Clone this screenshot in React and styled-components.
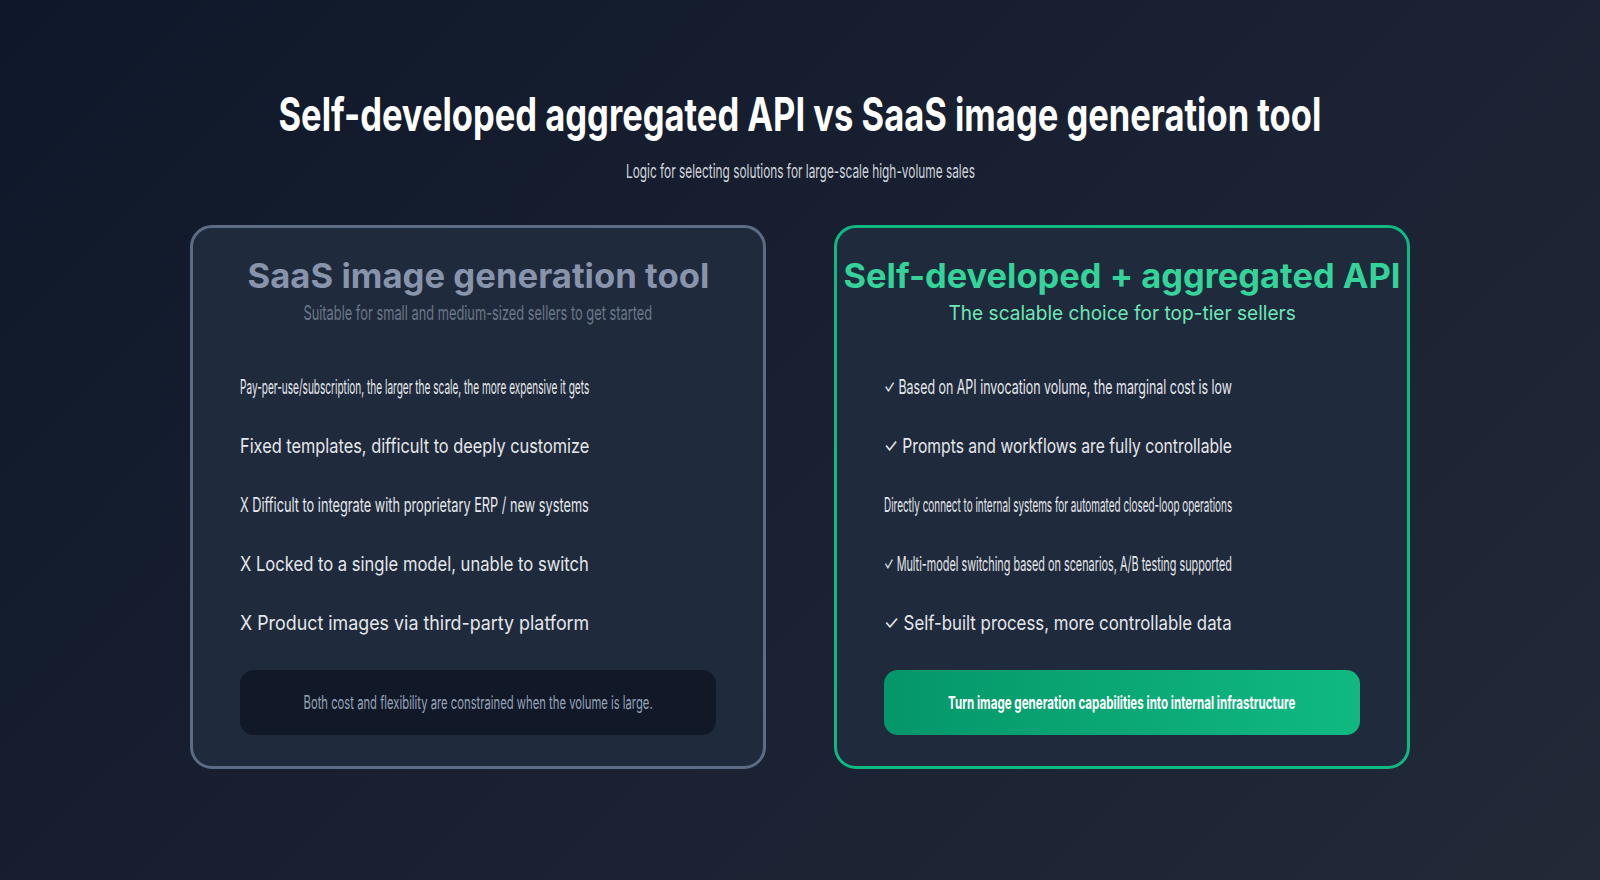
import React, { useLayoutEffect, useRef, useState } from "react";
import styled, { createGlobalStyle } from "styled-components";

const Global = createGlobalStyle`
  html, body { margin: 0; padding: 0; }
  body { width: 1600px; height: 880px; overflow: hidden;
    background: linear-gradient(135deg, #0f172a 0%, #1a2233 60%, #222a38 100%);
    font-family: Inter, "Noto Sans", sans-serif; }
`;

const Page = styled.div`
  width: 1600px; height: 880px; box-sizing: border-box;
  display: flex; flex-direction: column; align-items: center;
  padding-top: 86px;
`;
const Title = styled.h1`
  margin: 0; font-size: 46px; font-weight: 700; color: #fff; line-height: 56px;
  white-space: nowrap;
`;
const Sub = styled.div`
  margin-top: 18px; font-size: 19px; color: #d1d5db; line-height: 24px; white-space: nowrap;
`;
const Cards = styled.div`
  display: flex; gap: 68px; margin-top: 41px;
`;
const Card = styled.div`
  width: 576px; height: 544px; box-sizing: border-box;
  border: 3px solid ${p => (p.$accent ? "#10b981" : "#5d6c85")};
  border-radius: 22px; background: #1f2a3c;
  display: flex; flex-direction: column; align-items: center;
  padding: 26px 47px 0;
`;
const CardTitle = styled.div`
  font-size: 34px; font-weight: 700; line-height: 44px; white-space: nowrap;
  color: ${p => (p.$accent ? "#34d399" : "#8794ab")};
`;
const CardSub = styled.div`
  margin-top: 2px; font-size: 20px; line-height: 26px; white-space: nowrap;
  color: ${p => (p.$accent ? "#6ee7b7" : "#6b7788")};
`;
const List = styled.div`
  align-self: stretch; display: flex; flex-direction: column;
  margin-top: 46px; gap: 29px;
`;
const Item = styled.div`
  height: 30px; display: flex; align-items: center;
  font-size: 20px; color: #e5e7eb; white-space: nowrap;
`;
const Footer = styled.div`
  align-self: stretch; margin-top: 32px; height: 65px; border-radius: 14px;
  display: flex; align-items: center; justify-content: center;
  background: ${p => (p.$accent ? "linear-gradient(90deg,#059669,#10b981)" : "#111827")};
  color: ${p => (p.$accent ? "#ffffff" : "#94a3b8")};
  font-size: 18px; font-weight: ${p => (p.$accent ? 700 : 400)}; white-space: nowrap;
`;
const FitBox = styled.div`
  width: ${p => p.$w}px; overflow: visible; display: flex;
  justify-content: ${p => (p.$center ? "center" : "flex-start")};
`;
const FitInner = styled.span`
  display: inline-block; white-space: nowrap;
  transform-origin: ${p => (p.$center ? "center" : "left")} center;
`;

function Fit({ w, center, children }) {
  const ref = useRef(null);
  const [s, setS] = useState(1);
  useLayoutEffect(() => {
    if (ref.current) setS(w / ref.current.offsetWidth);
  }, [w]);
  return (
    <FitBox $w={w} $center={center}>
      <FitInner ref={ref} $center={center} style={{ transform: `scaleX(${s})` }}>{children}</FitInner>
    </FitBox>
  );
}

const left = [
  "Pay-per-use/subscription, the larger the scale, the more expensive it gets",
  "Fixed templates, difficult to deeply customize",
  "X Difficult to integrate with proprietary ERP / new systems",
  "X Locked to a single model, unable to switch",
  "X Product images via third-party platform",
];
const right = [
  "✓ Based on API invocation volume, the marginal cost is low",
  "✓ Prompts and workflows are fully controllable",
  "Directly connect to internal systems for automated closed-loop operations",
  "✓ Multi-model switching based on scenarios, A/B testing supported",
  "✓ Self-built process, more controllable data",
];

export default function App() {
  return (
    <>
      <Global />
      <Page>
        <Title><Fit w={1043} center>Self-developed aggregated API vs SaaS image generation tool</Fit></Title>
        <Sub><Fit w={349} center>Logic for selecting solutions for large-scale high-volume sales</Fit></Sub>
        <Cards>
          <Card>
            <CardTitle><Fit w={462} center>SaaS image generation tool</Fit></CardTitle>
            <CardSub><Fit w={349} center>Suitable for small and medium-sized sellers to get started</Fit></CardSub>
            <List>
              {left.map(t => <Item key={t}><Fit w={349}>{t}</Fit></Item>)}
            </List>
            <Footer><Fit w={349} center>Both cost and flexibility are constrained when the volume is large.</Fit></Footer>
          </Card>
          <Card $accent>
            <CardTitle $accent><Fit w={557} center>Self-developed + aggregated API</Fit></CardTitle>
            <CardSub $accent><Fit w={347} center>The scalable choice for top-tier sellers</Fit></CardSub>
            <List>
              {right.map(t => <Item key={t}><Fit w={348}>{t}</Fit></Item>)}
            </List>
            <Footer $accent><Fit w={347} center>Turn image generation capabilities into internal infrastructure</Fit></Footer>
          </Card>
        </Cards>
      </Page>
    </>
  );
}
